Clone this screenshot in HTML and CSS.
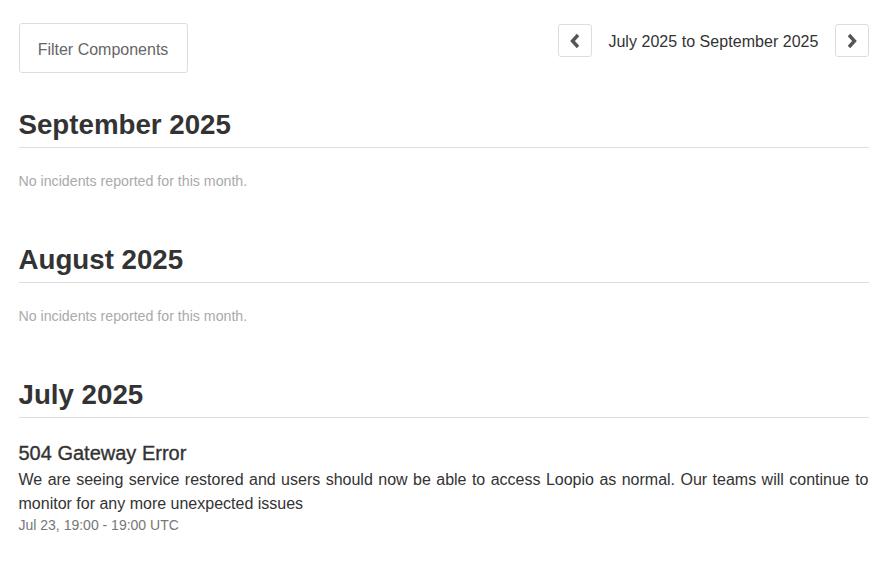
FILE: index.html
```html
<!DOCTYPE html>
<html lang="en">
<head>
    <meta charset="UTF-8">
    <meta name="viewport" content="width=device-width, initial-scale=1.0">
    <title>Incident History</title>
    <link rel="stylesheet" href="styles.css">
</head>
<body>
    <div class="wrap">
        <div class="top-bar">
            <button class="filter-btn">Filter Components</button>
            <div class="pager">
                <button class="page-btn">
                    <svg width="12" height="16" viewBox="0 0 12 16"><path d="M9 2 L3.5 8 L9 14" fill="none" stroke="#555" stroke-width="3.4"/></svg>
                </button>
                <span class="range">July 2025 to September 2025</span>
                <button class="page-btn">
                    <svg width="12" height="16" viewBox="0 0 12 16"><path d="M3 2 L8.5 8 L3 14" fill="none" stroke="#555" stroke-width="3.4"/></svg>
                </button>
            </div>
        </div>

        <div class="month">
            <h2 class="month-title">September 2025</h2>
            <p class="empty">No incidents reported for this month.</p>
        </div>

        <div class="month">
            <h2 class="month-title">August 2025</h2>
            <p class="empty">No incidents reported for this month.</p>
        </div>

        <div class="month">
            <h2 class="month-title">July 2025</h2>
            <div class="incident">
                <h3 class="incident-title">504 Gateway Error</h3>
                <p class="incident-body">We are seeing service restored and users should now be able to access Loopio as normal. Our teams will continue to monitor for any more unexpected issues</p>
                <small class="incident-date">Jul 23, 19:00 - 19:00 UTC</small>
            </div>
        </div>
    </div>
</body>
</html>
```

FILE: styles.css
```css
*{
    margin: 0;
    padding: 0;
    box-sizing: border-box;
}
body{
    background-color: #fff;
    font-family: "Liberation Sans", Arial, sans-serif;
    color: #333;
}
.wrap{
    width: 850px;
    margin: 0 auto;
    padding-top: 23px;
}
.top-bar{
    display: flex;
    justify-content: space-between;
    align-items: flex-start;
}
.filter-btn{
    width: 169px;
    height: 50px;
    padding: 3px 0 0;
    border: 1px solid #ddd;
    border-radius: 3px;
    background-color: #fff;
    color: #666;
    font-family: inherit;
    font-size: 16px;
}
.pager{
    display: flex;
    align-items: center;
    gap: 16px;
    margin-top: 1px;
}
.page-btn{
    width: 34px;
    height: 33px;
    border: 1px solid #ddd;
    border-radius: 3px;
    background-color: #fff;
    display: flex;
    align-items: center;
    justify-content: center;
}
.range{
    padding-top: 3px;
    font-size: 16px;
    letter-spacing: 0.04px;
    color: #333;
}
.month{
    margin-top: 34px;
}
.month + .month{
    margin-top: 53px;
}
.month-title{
    font-size: 27.7px;
    font-weight: bold;
    color: #333;
    line-height: 36px;
    padding-bottom: 4px;
    border-bottom: 1px solid #ddd;
}
.empty{
    margin-top: 25px;
    font-size: 14.2px;
    line-height: 16px;
    color: #aaa;
}
.incident{
    margin-top: 21px;
}
.incident-title{
    font-size: 20px;
    font-weight: normal;
    -webkit-text-stroke: 0.35px #333;
    color: #333;
    line-height: 28px;
}
.incident-body{
    margin-top: 1px;
    font-size: 16px;
    line-height: 24px;
    text-align: justify;
    color: #333;
}
.incident-date{
    display: block;
    font-size: 14px;
    color: #777;
    line-height: 18px;
}
```
